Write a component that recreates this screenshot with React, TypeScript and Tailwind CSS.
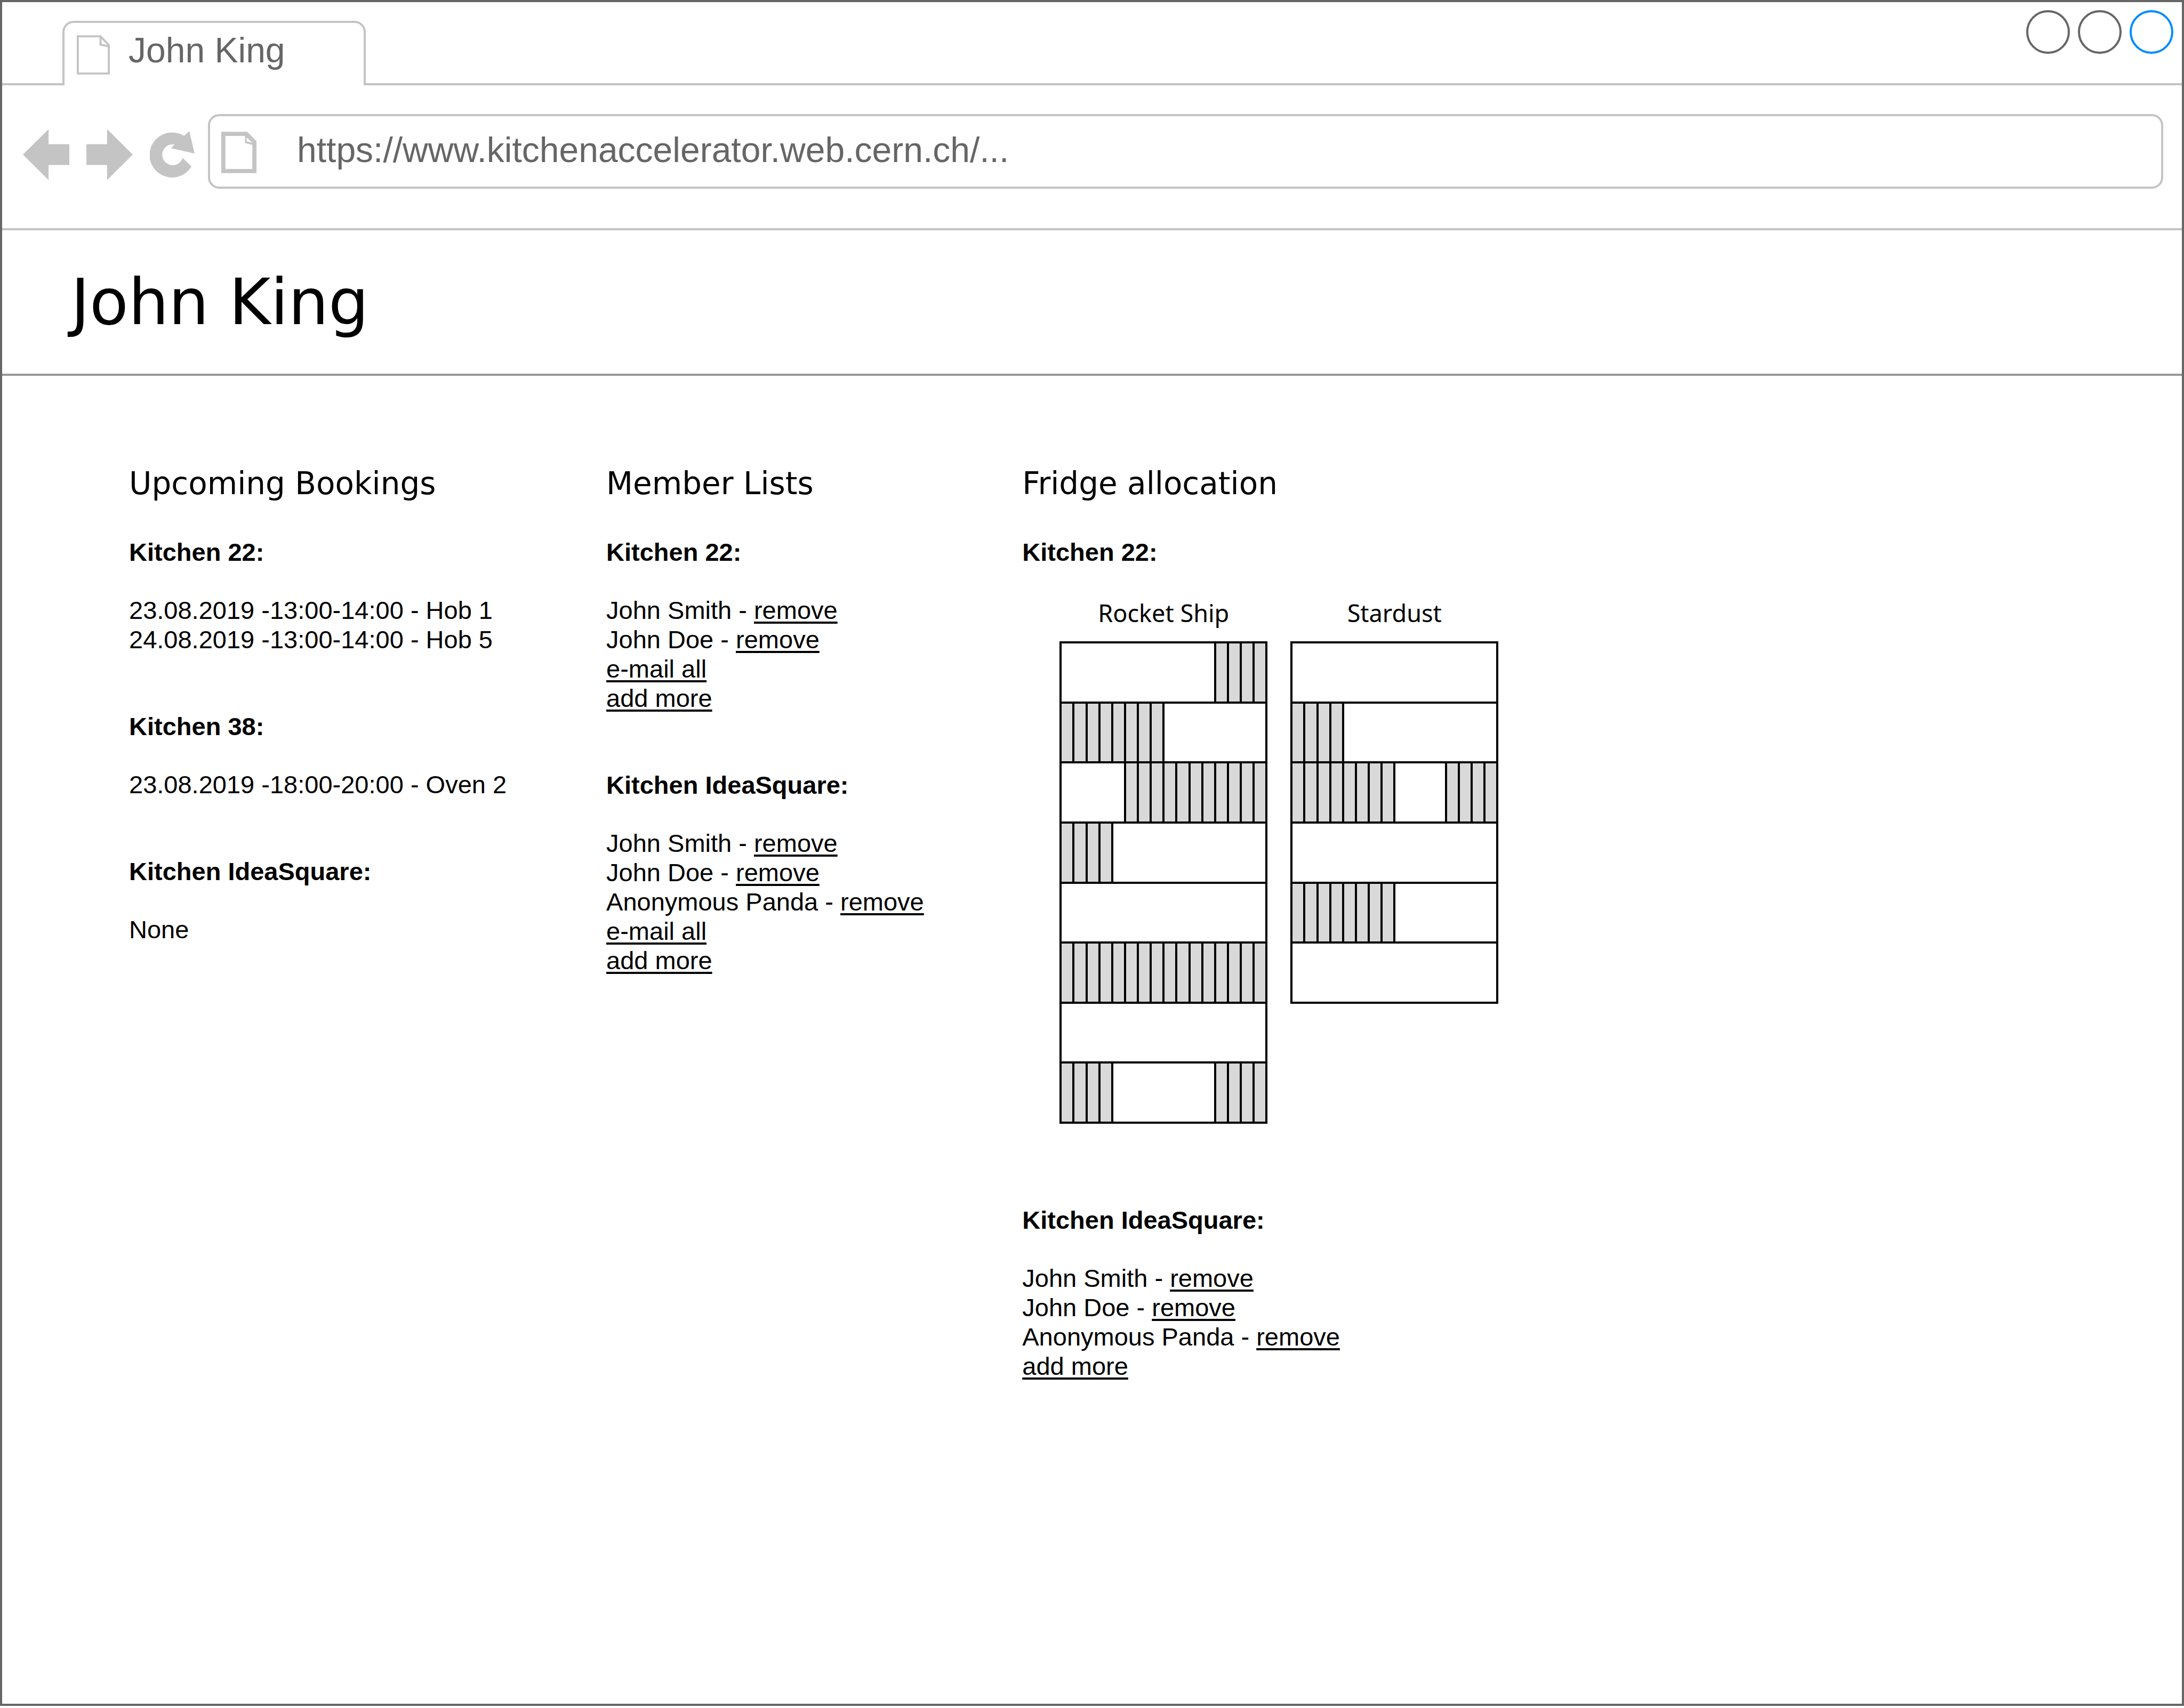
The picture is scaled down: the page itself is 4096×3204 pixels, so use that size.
import React from "react";

type Run = { filled: boolean; slots: number };
type Fridge = { name: string; height: string; shelves: Run[][] };
type Group = { title: string; lines: React.ReactNode[] };

const full = (slots: number): Run => ({ filled: true, slots });
const free = (slots: number): Run => ({ filled: false, slots });

const fridges: Fridge[] = [
  {
    name: "Rocket Ship",
    height: "h-[905px] grid-rows-8",
    shelves: [
      [free(12), full(4)],
      [full(8), free(8)],
      [free(5), full(11)],
      [full(4), free(12)],
      [free(16)],
      [full(16)],
      [free(16)],
      [full(4), free(8), full(4)],
    ],
  },
  {
    name: "Stardust",
    height: "h-[680px] grid-rows-6",
    shelves: [
      [free(16)],
      [full(4), free(12)],
      [full(8), free(4), full(4)],
      [free(16)],
      [full(8), free(8)],
      [free(16)],
    ],
  },
];

function TextLink({ children }: { children: React.ReactNode }) {
  return (
    <a href="#" className="underline decoration-[4px] underline-offset-[5px]">
      {children}
    </a>
  );
}

function Member({ name }: { name: string }) {
  return (
    <>
      {name} - <TextLink>remove</TextLink>
    </>
  );
}

const bookings: Group[] = [
  {
    title: "Kitchen 22:",
    lines: ["23.08.2019 -13:00-14:00 - Hob 1", "24.08.2019 -13:00-14:00 - Hob 5"],
  },
  { title: "Kitchen 38:", lines: ["23.08.2019 -18:00-20:00 - Oven 2"] },
  { title: "Kitchen IdeaSquare:", lines: ["None"] },
];

const members: Group[] = [
  {
    title: "Kitchen 22:",
    lines: [
      <Member name="John Smith" />,
      <Member name="John Doe" />,
      <TextLink>e-mail all</TextLink>,
      <TextLink>add more</TextLink>,
    ],
  },
  {
    title: "Kitchen IdeaSquare:",
    lines: [
      <Member name="John Smith" />,
      <Member name="John Doe" />,
      <Member name="Anonymous Panda" />,
      <TextLink>e-mail all</TextLink>,
      <TextLink>add more</TextLink>,
    ],
  },
];

const fridgeMembers: Group = {
  title: "Kitchen IdeaSquare:",
  lines: [
    <Member name="John Smith" />,
    <Member name="John Doe" />,
    <Member name="Anonymous Panda" />,
    <TextLink>add more</TextLink>,
  ],
};

function SectionTitle({ children }: { children: React.ReactNode }) {
  return (
    <h2 className="mb-[66px] whitespace-nowrap font-['DejaVu_Sans',sans-serif] text-[58px] leading-[70px]">
      {children}
    </h2>
  );
}

function GroupTitle({ children }: { children: React.ReactNode }) {
  return <h3 className="font-bold">{children}</h3>;
}

function GroupBlock({ group }: { group: Group }) {
  return (
    <div>
      <GroupTitle>{group.title}</GroupTitle>
      <ul className="mt-[54px]">
        {group.lines.map((line, i) => (
          <li key={i} className="whitespace-nowrap">
            {line}
          </li>
        ))}
      </ul>
    </div>
  );
}

function Shelf({ runs }: { runs: Run[] }) {
  return (
    <div className="grid grid-cols-16 gap-1">
      {runs.map((run, r) =>
        run.filled ? (
          Array.from({ length: run.slots }, (_, i) => <div key={`${r}-${i}`} className="bg-[#d9d9d9]" />)
        ) : (
          <div key={r} className="bg-white" style={{ gridColumn: `span ${run.slots}` }} />
        ),
      )}
    </div>
  );
}

function FridgeView({ fridge }: { fridge: Fridge }) {
  return (
    <figure className="w-[390px]">
      <figcaption className="mb-[21px] text-center font-['Noto_Sans',sans-serif] text-[45px] leading-[64px]">
        {fridge.name}
      </figcaption>
      <div className={`grid gap-1 bg-black p-1 ${fridge.height}`}>
        {fridge.shelves.map((runs, i) => (
          <Shelf key={i} runs={runs} />
        ))}
      </div>
    </figure>
  );
}

function Browser() {
  return (
    <>
      <div className="flex h-[156px]">
        <div className="w-[113px] border-b-4 border-[#c4c4c4]" />
        <div className="mt-[35px] flex w-[569px] items-start rounded-t-[21px] border-4 border-b-0 border-[#c4c4c4] pt-[13px] pl-[23px]">
          <svg className="mt-[10px] h-[74px] w-[62px]" viewBox="185 85 80 95" fill="none" stroke="#c4c4c4" strokeWidth="5">
            <path d="M187.5 87.5H242.5L262.5 109V177.5H187.5Z" />
            <path d="M242.5 87.5V107.5L262.5 112" />
          </svg>
          <span className="ml-[35px] text-[66px] leading-[76px] text-[#666]">John King</span>
        </div>
        <div className="flex flex-1 items-start justify-end gap-[15px] border-b-4 border-[#c4c4c4] pt-[15px] pr-[16px]">
          <button aria-label="Minimise" className="size-[82px] rounded-full border-4 border-[#666]" />
          <button aria-label="Maximise" className="size-[82px] rounded-full border-4 border-[#666]" />
          <button aria-label="Close" className="size-[82px] rounded-full border-4 border-[#008cff]" />
        </div>
      </div>

      <div className="flex items-center border-b-4 border-[#c4c4c4] pt-[54px] pr-[35px] pb-[74px] pl-[39px]">
        <div className="flex items-center gap-8 pt-[11px] pr-[25px]">
          <button aria-label="Back">
            <svg className="h-[96px] w-[87px]" viewBox="0 0 112 123" fill="#c4c4c4">
              <path d="M0 61.5L62 0V36.5H112V86.5H62V123Z" />
            </svg>
          </button>
          <button aria-label="Forward">
            <svg className="h-[96px] w-[87px]" viewBox="0 0 112 123" fill="#c4c4c4">
              <path d="M112 61.5L50 0V36.5H0V86.5H50V123Z" />
            </svg>
          </button>
          <button aria-label="Reload">
            <svg className="h-[87px] w-[84px]" viewBox="361 317 107 111" fill="#c4c4c4">
              <path d="M443.2 328.5A54 54 0 1 0 460.5 401.8L439.4 381A25 25 0 1 1 420.3 348.9L411.4 357.8L468 370.7L455.4 317Z" />
            </svg>
          </button>
        </div>
        <div className="flex h-[140px] min-w-0 flex-1 items-center rounded-[21px] border-4 border-[#c4c4c4] pl-[21px]">
          <svg className="mt-1 h-[78px] w-[66px] shrink-0" viewBox="532.5 317.5 85 100">
            <path
              fill="#c4c4c4"
              fillRule="evenodd"
              d="M532.5 317.5H595L617.5 340V417.5H532.5ZM542.5 327.5V407.5H607.5V349L590 344.5V327.5ZM594 331V341L607.5 344Z"
            />
          </svg>
          <input
            aria-label="Address"
            defaultValue="https://www.kitchenaccelerator.web.cern.ch/..."
            className="ml-[76px] min-w-0 flex-1 bg-transparent pb-[6px] text-[66px] leading-[76px] text-[#666] outline-none"
          />
        </div>
      </div>
    </>
  );
}

export default function App() {
  return (
    <div className="flex min-h-screen flex-col bg-white pb-1 font-['Liberation_Sans',Arial,sans-serif] text-black">
      <div className="flex flex-1 flex-col border-4 border-[#666]">
        <Browser />
        <header className="border-b-4 border-[#999] pt-[65px] pb-[64px] pl-[129px]">
          <h1 className="font-['DejaVu_Sans',sans-serif] text-[119px] leading-[140px]">John King</h1>
        </header>
        <main className="grid grid-cols-[896fr_781fr_2177fr] pt-[167px] pl-[238px] text-[47px] leading-[55px]">
          <section>
            <SectionTitle>Upcoming Bookings</SectionTitle>
            <div className="flex flex-col gap-[108px]">
              {bookings.map((group) => (
                <GroupBlock key={group.title} group={group} />
              ))}
            </div>
          </section>
          <section>
            <SectionTitle>Member Lists</SectionTitle>
            <div className="flex flex-col gap-[108px]">
              {members.map((group) => (
                <GroupBlock key={group.title} group={group} />
              ))}
            </div>
          </section>
          <section>
            <SectionTitle>Fridge allocation</SectionTitle>
            <GroupTitle>Kitchen 22:</GroupTitle>
            <div className="mt-[55px] mb-[153px] flex items-start gap-[43px] pl-[70px]">
              {fridges.map((fridge) => (
                <FridgeView key={fridge.name} fridge={fridge} />
              ))}
            </div>
            <GroupBlock group={fridgeMembers} />
          </section>
        </main>
      </div>
    </div>
  );
}
